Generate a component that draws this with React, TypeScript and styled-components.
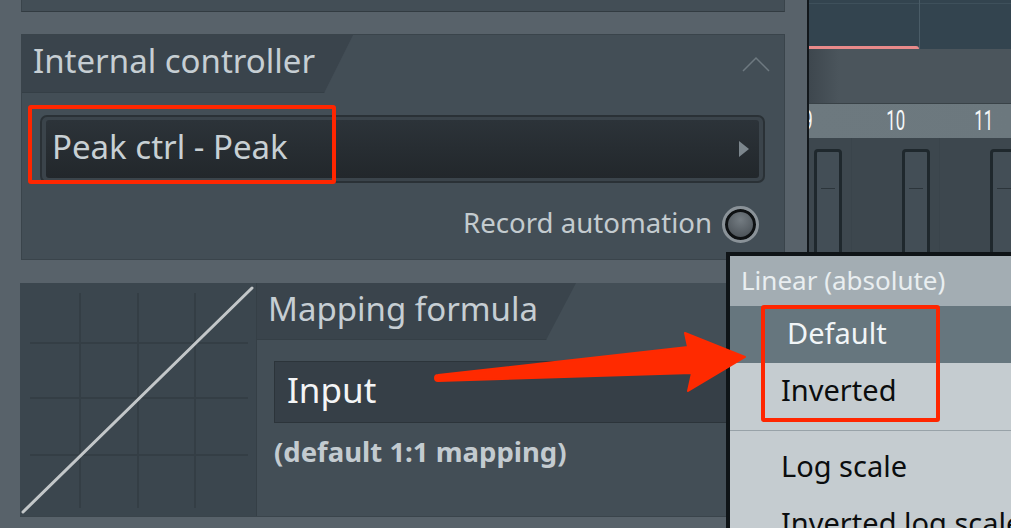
import styled, { createGlobalStyle } from 'styled-components'

const GlobalStyle = createGlobalStyle`
  html, body {
    margin: 0;
    padding: 0;
    background: #58626a;
  }
  body {
    font-family: 'Noto Sans', 'Open Sans', sans-serif;
  }
`

const channels = ['9', '10', '11']

const App = (): JSX.Element => {
  return (
    <>
      <GlobalStyle />
      <Screen>
        <LeftColumn>
          <StubPanel />
          <ControllerPanel>
            <PanelHeader $height={58}>
              <Tab $slant={29} $lineHeight={52}>Internal controller</Tab>
              <Chevron viewBox='0 0 28 16'>
                <polyline points='1,15 14,2 27,15' />
              </Chevron>
            </PanelHeader>
            <ControllerBody>
              <Dropdown>
                <DropdownInner>
                  <span>Peak ctrl - Peak</span>
                  <Triangle />
                </DropdownInner>
              </Dropdown>
              <RecordRow>
                <RecordLabel>Record automation</RecordLabel>
                <Radio />
              </RecordRow>
            </ControllerBody>
          </ControllerPanel>
          <MappingPanel>
            <Graph>
              <svg width='236' height='233' viewBox='0 0 236 233'>
                <g stroke='#343e45' strokeWidth='2'>
                  <line x1='60' y1='10' x2='60' y2='225' />
                  <line x1='118' y1='10' x2='118' y2='225' />
                  <line x1='175' y1='10' x2='175' y2='225' />
                  <line x1='10' y1='60' x2='228' y2='60' />
                  <line x1='10' y1='115' x2='228' y2='115' />
                  <line x1='10' y1='172' x2='228' y2='172' />
                </g>
                <line
                  x1='3'
                  y1='229'
                  x2='232'
                  y2='5'
                  stroke='#c3c7c9'
                  strokeWidth='3'
                  strokeLinecap='round'
                />
              </svg>
            </Graph>
            <MappingMain>
              <PanelHeader $height={57}>
                <Tab $slant={30} $lineHeight={52}>Mapping formula</Tab>
              </PanelHeader>
              <MappingBody>
                <FormulaInput>Input</FormulaInput>
                <Hint>(default 1:1 mapping)</Hint>
              </MappingBody>
            </MappingMain>
          </MappingPanel>
        </LeftColumn>

        <RightColumn>
          <Playlist>
            <ClipLine />
          </Playlist>
          <Toolbar />
          <Mixer>
            <ChannelHeader>
              {channels.map((n) => (
                <ChannelNumber key={n}>
                  <span>{n}</span>
                </ChannelNumber>
              ))}
            </ChannelHeader>
            <ChannelRow>
              {channels.map((n) => (
                <Channel key={n}>
                  <Slot>
                    <Tick />
                  </Slot>
                </Channel>
              ))}
            </ChannelRow>
          </Mixer>
        </RightColumn>

        <Menu>
          <MenuTitle>Linear (absolute)</MenuTitle>
          <MenuItem $active $indent={57}>
            Default
          </MenuItem>
          <MenuItem $indent={51}>Inverted</MenuItem>
          <Separator />
          <MenuItem $indent={51}>Log scale</MenuItem>
          <MenuItem $indent={51}>Inverted log scale</MenuItem>
        </Menu>

        <Highlight $left={28} $top={105} $width={308} $height={79} />
        <Highlight $left={761} $top={305} $width={179} $height={117} />

        <Arrow width='320' height='72' viewBox='0 0 320 72'>
          <path
            d='M8,50 L258,22 L255,8 L315,32 L258,66 L262,48 L8,56 A3,3 0 0 1 8,50 Z'
            fill='#ff2a00'
            stroke='#ff2a00'
            strokeWidth='2'
            strokeLinejoin='round'
          />
        </Arrow>
      </Screen>
    </>
  )
}

const Screen = styled.div`
  position: relative;
  width: 1011px;
  height: 528px;
  overflow: hidden;
  display: flex;
  background: #58626a;
`

const LeftColumn = styled.div`
  width: 807px;
  flex-shrink: 0;
  box-sizing: border-box;
  padding: 0 22px 0 21px;
  display: flex;
  flex-direction: column;
`

const StubPanel = styled.div`
  height: 11px;
  background: #434e56;
  border: 1px solid #3a444b;
  border-top: none;
  border-bottom-color: #323b41;
`

const ControllerPanel = styled.section`
  margin-top: 22px;
  height: 226px;
  box-sizing: border-box;
  background: #434e56;
  border: 1px solid #3a444b;
  display: flex;
  flex-direction: column;
`

const PanelHeader = styled.div<{ $height: number }>`
  height: ${(p) => p.$height}px;
  flex-shrink: 0;
  display: flex;
  align-items: flex-start;
  justify-content: space-between;
`

const Tab = styled.h2<{ $slant: number; $lineHeight: number }>`
  margin: 0;
  height: 100%;
  box-sizing: border-box;
  padding: 0 38px 0 11px;
  background: #3a444c;
  border-bottom: 1px solid #353f46;
  border-bottom-right-radius: 6px;
  clip-path: polygon(
    0 0,
    100% 0,
    calc(100% - ${(p) => p.$slant}px) 100%,
    0 100%
  );
  color: #c6ced3;
  font-size: 33px;
  font-weight: 400;
  line-height: ${(p) => p.$lineHeight}px;
  white-space: nowrap;
`

const Chevron = styled.svg`
  width: 28px;
  height: 16px;
  margin: 21px 14px 0 0;
  fill: none;
  stroke: #6e7980;
  stroke-width: 1.5;
`

const ControllerBody = styled.div`
  flex: 1;
  padding: 22px 19px 0 18px;
  display: flex;
  flex-direction: column;
`

const Dropdown = styled.div`
  height: 68px;
  box-sizing: border-box;
  padding: 3px 4px;
  border-radius: 7px;
  background: #3b444b;
  border: 2px solid #2a3136;
`

const DropdownInner = styled.div`
  height: 100%;
  box-sizing: border-box;
  padding: 0 10px 0 6px;
  border-radius: 3px;
  background: linear-gradient(#2c3339, #22272b);
  display: flex;
  align-items: center;
  justify-content: space-between;
  color: #c8d0d4;
  font-size: 33px;
  line-height: 50px;
  span:first-child {
    margin-top: -4px;
  }
`

const Triangle = styled.span`
  width: 0;
  height: 0;
  border-top: 8px solid transparent;
  border-bottom: 8px solid transparent;
  border-left: 10px solid #7c868d;
`

const RecordRow = styled.div`
  margin-top: 23px;
  display: flex;
  justify-content: flex-end;
  align-items: center;
  gap: 10px;
  padding-right: 6px;
`

const RecordLabel = styled.span`
  color: #c3cbcf;
  font-size: 27.6px;
  line-height: 33px;
  margin-top: -4px;
`

const Radio = styled.span`
  width: 37px;
  height: 37px;
  box-sizing: border-box;
  border-radius: 50%;
  border: 3px solid #8a9298;
  background: radial-gradient(circle at 50% 35%, #747c82, #4c5359 70%);
  box-shadow: inset 0 0 0 3px #0e1113;
`

const MappingPanel = styled.section`
  margin: 23px 0 0 -1px;
  height: 233px;
  display: flex;
  background: #434e56;
  border-bottom: 1px solid #3a444b;
`

const Graph = styled.div`
  width: 236px;
  flex-shrink: 0;
  background: #3b464e;
  border-right: 1px solid #353f46;
  svg {
    display: block;
  }
`

const MappingMain = styled.div`
  flex: 1;
  display: flex;
  flex-direction: column;
`

const MappingBody = styled.div`
  flex: 1;
  padding: 21px 20px 0 17px;
`

const FormulaInput = styled.div`
  height: 62px;
  box-sizing: border-box;
  padding-left: 12px;
  background: #363f47;
  border: 1px solid #2c343a;
  color: #f4f5f6;
  font-size: 35px;
  line-height: 56px;
`

const Hint = styled.p`
  margin: 11px 0 0;
  color: #c3cbd0;
  font-size: 27.5px;
  font-weight: 700;
  line-height: 36px;
`

const RightColumn = styled.div`
  flex: 1;
  min-width: 0;
  overflow: hidden;
  border-left: 2px solid #12171b;
  display: flex;
  flex-direction: column;
`

const Playlist = styled.div`
  height: 49px;
  flex-shrink: 0;
  position: relative;
  background: #33444f;
  background-image: linear-gradient(90deg, transparent 110px, #4a5c67 110px, #4a5c67 111px, transparent 111px),
    linear-gradient(transparent 3px, #3e505b 3px, #3e505b 4px, transparent 4px);
`

const ClipLine = styled.div`
  position: absolute;
  left: 0;
  bottom: 0;
  width: 110px;
  height: 3px;
  border-top-right-radius: 3px;
  background: #e98a8a;
`

const Toolbar = styled.div`
  height: 54px;
  flex-shrink: 0;
  background: linear-gradient(90deg, #3e474e, #4b555c 30px, #4b555c);
  border-bottom: 1px solid #394247;
`

const Mixer = styled.div`
  flex: 1;
  background: #3d474e;
  display: flex;
  flex-direction: column;
`

const ChannelHeader = styled.div`
  height: 34px;
  flex-shrink: 0;
  margin-left: -45px;
  display: flex;
  background: linear-gradient(90deg, #646f76, #6d797f 40px, #6c787e);
`

const ChannelNumber = styled.div`
  width: 88px;
  flex-shrink: 0;
  display: flex;
  justify-content: center;
  align-items: center;
  span {
    display: inline-block;
    color: #f5f7f8;
    font-family: Roboto, sans-serif;
    font-size: 28px;
    line-height: 34px;
    transform: scaleX(0.6);
  }
`

const ChannelRow = styled.div`
  flex: 1;
  margin-left: -45px;
  display: flex;
`

const Channel = styled.div`
  width: 88px;
  flex-shrink: 0;
  padding: 11px 0 0 50px;
  box-sizing: border-box;
  border-right: 1px solid #3a444b;
`

const Slot = styled.div`
  width: 28px;
  height: 140px;
  box-sizing: border-box;
  padding-top: 36px;
  display: flex;
  justify-content: center;
  border: 3px solid #1f282d;
  border-radius: 4px;
  background: #434e56;
`

const Tick = styled.span`
  width: 14px;
  height: 1px;
  background: #2c353b;
`

const Menu = styled.div`
  position: absolute;
  left: 726px;
  top: 252px;
  width: 310px;
  height: 300px;
  border: 4px solid #0f1417;
  border-right: none;
  background: #c5ccd0;
  display: flex;
  flex-direction: column;
`

const MenuTitle = styled.div`
  height: 50px;
  flex-shrink: 0;
  padding-left: 11px;
  background: #a3adb3;
  color: #e9eef0;
  font-size: 26px;
  line-height: 48px;
  white-space: nowrap;
`

const MenuItem = styled.div<{ $active?: boolean; $indent: number }>`
  height: 57px;
  flex-shrink: 0;
  padding-left: ${(p) => p.$indent}px;
  background: ${(p) => (p.$active ? '#66767e' : 'transparent')};
  color: ${(p) => (p.$active ? '#f1f5f7' : '#0b0d0e')};
  font-size: 29px;
  line-height: 54px;
  white-space: nowrap;
`

const Separator = styled.div`
  height: 1px;
  flex-shrink: 0;
  margin: 10px 0 8px;
  background: #98a2a8;
`

const Highlight = styled.div<{
  $left: number
  $top: number
  $width: number
  $height: number
}>`
  position: absolute;
  left: ${(p) => p.$left}px;
  top: ${(p) => p.$top}px;
  width: ${(p) => p.$width}px;
  height: ${(p) => p.$height}px;
  box-sizing: border-box;
  border: 4px solid #ff2600;
  border-radius: 3px;
  pointer-events: none;
`

const Arrow = styled.svg`
  position: absolute;
  left: 430px;
  top: 325px;
  pointer-events: none;
`

export default App
